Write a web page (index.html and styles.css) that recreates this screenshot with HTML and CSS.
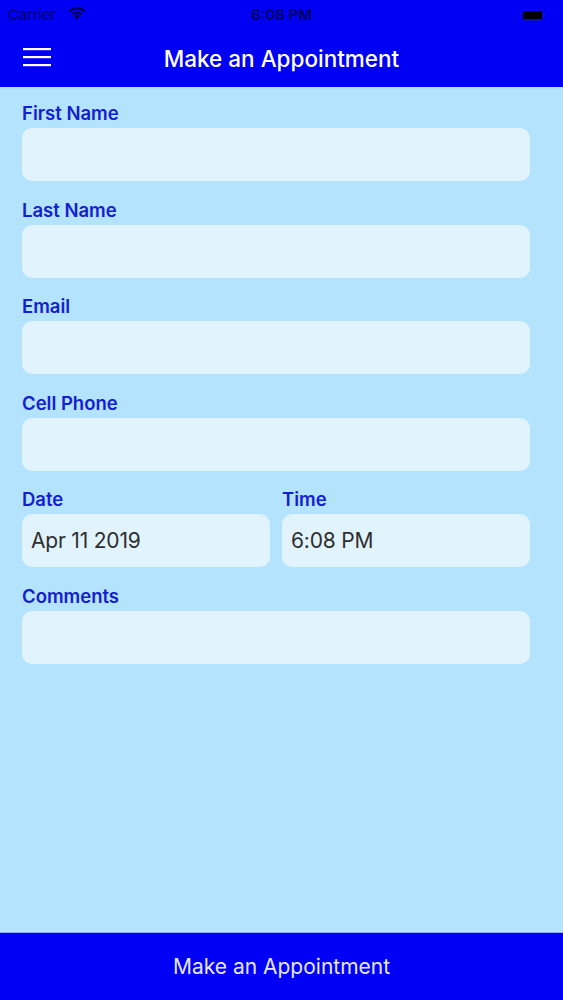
FILE: index.html
```html
<!DOCTYPE html>
<html>
<head>
<meta charset="utf-8">
<link rel="stylesheet" href="styles.css">
</head>
<body>
<div class="app">
  <header class="top">
    <div class="status">
      <div class="status-left">
        <span class="carrier">Carrier</span>
        <svg class="wifi" width="18" height="13" viewBox="0 0 18 13">
          <path d="M9 12.5 L6.2 9.3 A4 4 0 0 1 11.8 9.3 Z" fill="#000050"/>
          <path d="M4.4 7.4 A6.6 6.6 0 0 1 13.6 7.4" fill="none" stroke="#000050" stroke-width="2.2"/>
          <path d="M1.4 4.4 A10.6 10.6 0 0 1 16.6 4.4" fill="none" stroke="#000050" stroke-width="2.2"/>
        </svg>
      </div>
      <span class="clock">6:08 PM</span>
      <div class="status-right">
        <svg width="26" height="12" viewBox="0 0 26 12">
          <rect x="0.5" y="0.5" width="22" height="11" rx="3" fill="none" stroke="#1a1a9a" stroke-opacity="0.45"/>
          <rect x="2" y="2" width="19" height="8" rx="1.5" fill="#000"/>
          <rect x="23.5" y="4" width="1.5" height="4" rx="0.7" fill="#1a1a9a" fill-opacity="0.45"/>
        </svg>
      </div>
    </div>
    <div class="nav">
      <svg class="burger" width="30" height="20" viewBox="0 0 30 20">
        <rect x="1" y="1" width="28" height="2.2" fill="#fff"/>
        <rect x="1" y="9" width="28" height="2.2" fill="#fff"/>
        <rect x="1" y="17" width="28" height="2.2" fill="#fff"/>
      </svg>
      <h1 class="title">Make an Appointment</h1>
    </div>
  </header>

  <main class="form">
    <div class="field">
      <label class="label">First Name</label>
      <div class="input"></div>
    </div>
    <div class="field">
      <label class="label">Last Name</label>
      <div class="input"></div>
    </div>
    <div class="field">
      <label class="label">Email</label>
      <div class="input"></div>
    </div>
    <div class="field">
      <label class="label">Cell Phone</label>
      <div class="input"></div>
    </div>
    <div class="row">
      <div class="field">
        <label class="label">Date</label>
        <div class="input"><span class="value">Apr 11 2019</span></div>
      </div>
      <div class="field">
        <label class="label">Time</label>
        <div class="input"><span class="value">6:08 PM</span></div>
      </div>
    </div>
    <div class="field">
      <label class="label">Comments</label>
      <div class="input"></div>
    </div>
  </main>

  <footer class="bottom">
    <span class="bottom-text">Make an Appointment</span>
  </footer>
</div>
</body>
</html>
```

FILE: styles.css
```css
* { box-sizing: border-box; }
html, body {
  margin: 0;
  padding: 0;
  width: 563px;
  height: 1000px;
  overflow: hidden;
}
body {
  font-family: Inter, Roboto, "Liberation Sans", sans-serif;
  background: #b3e3fd;
}
.app {
  display: flex;
  flex-direction: column;
  height: 1000px;
}
.top {
  background: #0000f5;
  height: 87px;
  flex: none;
}
.status {
  height: 28px;
  display: flex;
  align-items: center;
  justify-content: space-between;
  padding: 1px 16px 0 8px;
  position: relative;
}
.status-left {
  display: flex;
  align-items: center;
  gap: 12px;
}
.carrier {
  font-size: 15px;
  color: #000060;
  letter-spacing: -0.2px;
}
.wifi { margin-top: -2px; }
.clock {
  position: absolute;
  left: 0;
  right: 0;
  top: 1px;
  bottom: 0;
  display: flex;
  align-items: center;
  justify-content: center;
  font-size: 15px;
  font-weight: 600;
  color: #000060;
}
.status-right {
  display: flex;
  align-items: center;
  padding-top: 1px;
}
.nav {
  height: 59px;
  display: flex;
  align-items: center;
  position: relative;
  padding-left: 22px;
}
.burger { display: block; margin-top: -2px; }
.title {
  position: absolute;
  left: 0;
  right: 0;
  top: 0;
  bottom: 0;
  margin: 0;
  display: flex;
  align-items: center;
  justify-content: center;
  font-size: 22.5px;
  font-weight: 500;
  color: #fff;
  padding-top: 2px;
  pointer-events: none;
}
.form {
  flex: 1;
  padding: 15px 33px 0 22px;
  display: flex;
  flex-direction: column;
  align-items: stretch;
  gap: 17.5px;
}
.field {
  display: flex;
  flex-direction: column;
  gap: 4px;
  flex: none;
}
.row {
  display: flex;
  gap: 12px;
}
.row .field {
  flex: 1 1 0;
}
.label {
  font-size: 18.5px;
  line-height: 22px;
  font-weight: 600;
  color: #1320cf;
}
.input {
  height: 53px;
  background: #e1f4fe;
  border-radius: 10px;
  display: flex;
  align-items: center;
  padding: 0 9px;
}
.value {
  font-size: 21px;
  color: #2e2e2e;
  letter-spacing: -0.2px;
}
.bottom {
  flex: none;
  height: 68px;
  background: #0000f5;
  border-top: 1px solid #8fa8f0;
  display: flex;
  align-items: center;
  justify-content: center;
}
.bottom-text {
  font-size: 21px;
  color: #e4e6f8;
}
```
